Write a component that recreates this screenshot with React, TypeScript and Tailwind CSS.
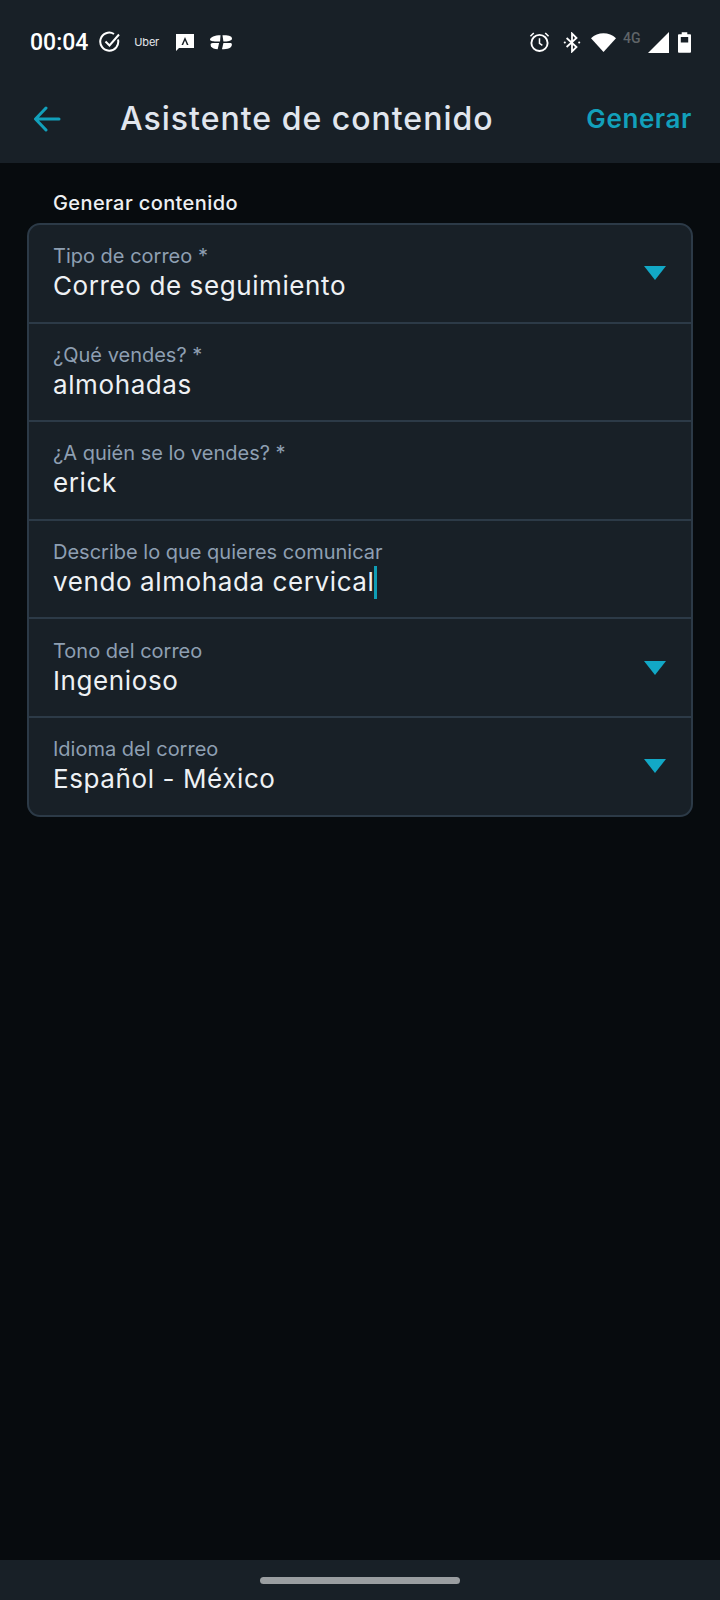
const fields = [
  { label: "Tipo de correo *", value: "Correo de seguimiento", select: true },
  { label: "¿Qué vendes? *", value: "almohadas" },
  { label: "¿A quién se lo vendes? *", value: "erick" },
  { label: "Describe lo que quieres comunicar", value: "vendo almohada cervical", caret: true },
  { label: "Tono del correo", value: "Ingenioso", select: true },
  { label: "Idioma del correo", value: "Español - México", select: true },
];

const StatusBar = () => (
  <div className="flex h-[84px] items-center justify-between pl-[30px] pr-[29px] text-white">
    <div className="flex items-center">
      <span className="font-['Roboto',sans-serif] text-[23px] font-medium leading-none">00:04</span>
      {/* check */}
      <svg className="ml-[11px]" width="22" height="22" viewBox="0 0 22 22" fill="none" stroke="white" strokeWidth="2">
        <path d="M19 8.5A9 9 0 1 1 15 3" />
        <path d="M6.5 10.5l4 4L20 3.5" />
      </svg>
      <span className="ml-[13px] font-['Inter',sans-serif] text-[11px] leading-none tracking-[-0.2px] text-gray-200">Uber</span>
      {/* message */}
      <svg className="ml-[17px]" width="18" height="18" viewBox="0 0 18 18">
        <path fillRule="evenodd" fill="white" d="M0 1h18v14H3l-3 3zM9 4l-3.5 8h1.600L9 7.500 10.900 12h1.600z" />
      </svg>
      {/* logo */}
      <svg className="ml-[16px]" width="23" height="16" viewBox="0 0 24 16" fill="white">
        <path d="M11 1C5 1 0 3 0 5.500C0 7 3 7.500 6 7.500H10.500z" />
        <path d="M13 1C18 1 23 1.500 23 4.500C23 6.500 18 7.500 14 7.500z" />
        <path d="M9.500 9H3C1 9 0 10 1 12.500C2 14.500 5 15.500 8 15.500z" />
        <path d="M14 9H22C23.500 10 23 13 20 14.500C18 15.500 15 15.500 12.500 15.500z" />
      </svg>
    </div>
    <div className="flex items-center">
      {/* alarm */}
      <svg width="21" height="22" viewBox="0 0 22 22" fill="none" stroke="white" strokeWidth="2">
        <circle cx="11" cy="12" r="8.500" />
        <path d="M11 7v5.500l3 2M1.500 5L5 1.500M20.500 5L17 1.500" strokeWidth="1.600" />
      </svg>
      {/* bluetooth */}
      <svg className="ml-[13px]" width="18" height="21" viewBox="0 0 20 22" fill="none" stroke="white" strokeWidth="2">
        <path d="M4 6l11 10-5 5V1l5 5L4 16" />
        <circle cx="2" cy="11" r="1.200" fill="white" stroke="none" />
        <circle cx="18" cy="11" r="1.200" fill="white" stroke="none" />
      </svg>
      {/* wifi */}
      <svg className="ml-[10px]" width="25" height="21" viewBox="0 0 26 20" fill="white">
        <path d="M0 5.500C7 -1.500 19 -1.500 26 5.500L13 20z" />
      </svg>
      <span className="ml-[7px] mb-[8px] w-[20px] font-['Roboto',sans-serif] text-[14px] font-medium leading-none text-[#5f6468]">4G</span>
      {/* signal */}
      <svg className="ml-[5px]" width="21" height="21" viewBox="0 0 21 21" fill="white">
        <path d="M21 0v21H0z" />
      </svg>
      {/* battery */}
      <svg className="ml-[9px]" width="13" height="21" viewBox="0 0 14 22" fill="white">
        <path fillRule="evenodd" d="M4 0h6v2h3a1 1 0 0 1 1 1v18a1 1 0 0 1-1 1H1a1 1 0 0 1-1-1V3a1 1 0 0 1 1-1h3zM3 5v6h8V5z" />
      </svg>
    </div>
  </div>
);

export default function App() {
  return (
    <div className="flex h-[1600px] w-[720px] flex-col overflow-hidden bg-[#070b0e] font-['Inter',sans-serif]">
      <header className="h-[163px] shrink-0 bg-[#182027]">
        <StatusBar />
        <div className="flex h-[69px] items-center pl-[33px] pr-[28px]">
          <svg width="28" height="26" viewBox="0 0 28 26" fill="none" stroke="#12a0bb" strokeWidth="3" strokeLinecap="round" strokeLinejoin="round">
            <path d="M26 13H3M13 2L2.500 13 13 24" />
          </svg>
          <h1 className="ml-[59px] text-[32px] font-medium tracking-[1px] text-[#e1e6ee]">Asistente de contenido</h1>
          <button className="ml-auto text-[26px] font-semibold tracking-[0.6px] text-[#12a0bb]">Generar</button>
        </div>
      </header>

      <main className="flex-1 px-[27px]">
        <h2 className="ml-[26px] mt-[29px] mb-[8px] text-[20px] leading-[23px] font-medium tracking-[0.4px] text-[#eef0f3]">Generar contenido</h2>
        <div className="overflow-hidden rounded-[13px] border-2 border-[#2c3a47] bg-[#182027]">
          {fields.map((f, i) => (
            <div
              key={f.label}
              className={`flex items-center justify-between pl-[24px] pr-[25px] ${i > 0 ? "h-[98.600px] border-t-2 border-[#2c3a47]" : "h-[96.600px]"}`}
            >
              <div>
                <div className="text-[20px] leading-[24px] text-[#8e9fb2]">{f.label}</div>
                <div className="mt-[2px] flex items-center text-[26px] leading-[32px] tracking-[0.6px] text-[#eef1f4]">
                  {f.value}
                  {f.caret && <span className="h-[33px] w-[3px] bg-[#0f9db5]" />}
                </div>
              </div>
              {f.select && (
                <svg width="22" height="14" viewBox="0 0 22 14" fill="#12a8c6">
                  <path d="M0 0h22L11 14z" />
                </svg>
              )}
            </div>
          ))}
        </div>
      </main>

      <footer className="flex h-[40px] shrink-0 items-center justify-center bg-[#182027]">
        <div className="h-[7px] w-[200px] rounded-full bg-[#9a9ea1]" />
      </footer>
    </div>
  );
}
